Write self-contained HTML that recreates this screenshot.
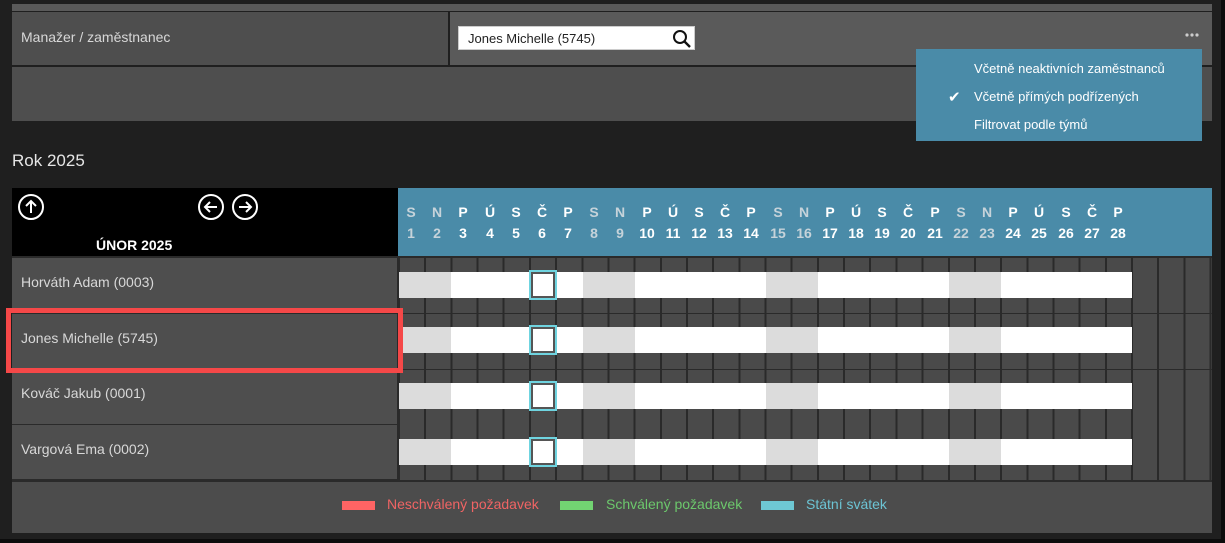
<!DOCTYPE html>
<html><head><meta charset="utf-8"><style>
*{margin:0;padding:0;box-sizing:border-box}
body{width:1225px;height:543px;background:#0c0c0c;position:relative;overflow:hidden;font-family:"Liberation Sans",sans-serif}
.a{position:absolute}
.t{color:#d8d8d8;font-size:14px;white-space:nowrap}
.hd{position:absolute;top:202px;width:26px;text-align:center;color:#fff;font-weight:bold;font-size:14px;line-height:21px}
.hd.w{color:#c6d3da}
.row{position:absolute;left:398px;width:814px;height:55px;background-color:#4a4a4a;background-image:repeating-linear-gradient(90deg,#2a2a2a 0,#2a2a2a 2px,transparent 2px,transparent 26.18px)}
.name{position:absolute;left:12px;width:385px;height:54px;background:#4e4e4e}
.bar{position:absolute;height:26px;background:#fff}
</style></head><body>
<div class="a" style="left:0;top:0;width:1221px;height:539px;background:#1f1f1f"></div>
<div class="a" style="left:12px;top:4px;width:1200px;height:7px;background:#5a5a5a"></div>
<div class="a" style="left:12px;top:12px;width:436px;height:53px;background:#4e4e4e"></div>
<div class="a" style="left:450px;top:12px;width:762px;height:53px;background:#5a5a5a"></div>
<div class="a t" style="left:21px;top:29px">Manažer / zaměstnanec</div>
<div class="a" style="left:458px;top:26px;width:237px;height:24px;background:#fff;border:1px solid #ccc"></div>
<div class="a" style="left:468px;top:31px;font-size:13px;color:#222">Jones Michelle (5745)</div>
<svg class="a" style="left:672px;top:29px" width="20" height="20"><circle cx="8" cy="8" r="6" fill="none" stroke="#111" stroke-width="2"/><line x1="12.5" y1="12.5" x2="18" y2="18" stroke="#111" stroke-width="2.4"/></svg>
<svg class="a" style="left:1185px;top:32px" width="16" height="6"><circle cx="2" cy="3" r="1.6" fill="#ccc"/><circle cx="7" cy="3" r="1.6" fill="#ccc"/><circle cx="12" cy="3" r="1.6" fill="#ccc"/></svg>
<div class="a" style="left:12px;top:67px;width:1200px;height:54px;background:#4e4e4e"></div>
<div class="a" style="left:12px;top:151px;font-size:17px;color:#e6e6e6">Rok 2025</div>

<div class="a" style="left:916px;top:49px;width:286px;height:92px;background:#4a8ba8"></div>
<div class="a" style="left:974px;top:61px;font-size:13px;color:#fff">Včetně neaktivních zaměstnanců</div>
<div class="a" style="left:948px;top:88px;font-size:15px;color:#fff">✔</div>
<div class="a" style="left:974px;top:89px;font-size:13px;color:#fff">Včetně přímých podřízených</div>
<div class="a" style="left:974px;top:117px;font-size:13px;color:#fff">Filtrovat podle týmů</div>

<div class="a" style="left:12px;top:188px;width:386px;height:68px;background:#000"></div>
<svg class="a" style="left:16px;top:192px" width="250" height="30" fill="none" stroke="#fff" stroke-width="2">
<circle cx="15" cy="15" r="12"/><path d="M15 21V9M10 14l5-5 5 5"/>
<circle cx="195" cy="15" r="12"/><path d="M201 15H189M194 10l-5 5 5 5"/>
<circle cx="229" cy="15" r="12"/><path d="M223 15H235M230 10l5 5-5 5"/>
</svg>
<div class="a" style="left:96px;top:237px;font-size:14px;font-weight:bold;color:#fff">ÚNOR 2025</div>
<div class="a" style="left:398px;top:188px;width:814px;height:68px;background:#4a8ba8"></div>
<div class="hd w" style="left:398px">S<br>1</div>
<div class="hd w" style="left:424px">N<br>2</div>
<div class="hd" style="left:450px">P<br>3</div>
<div class="hd" style="left:477px">Ú<br>4</div>
<div class="hd" style="left:503px">S<br>5</div>
<div class="hd" style="left:529px">Č<br>6</div>
<div class="hd" style="left:555px">P<br>7</div>
<div class="hd w" style="left:581px">S<br>8</div>
<div class="hd w" style="left:607px">N<br>9</div>
<div class="hd" style="left:634px">P<br>10</div>
<div class="hd" style="left:660px">Ú<br>11</div>
<div class="hd" style="left:686px">S<br>12</div>
<div class="hd" style="left:712px">Č<br>13</div>
<div class="hd" style="left:738px">P<br>14</div>
<div class="hd w" style="left:765px">S<br>15</div>
<div class="hd w" style="left:791px">N<br>16</div>
<div class="hd" style="left:817px">P<br>17</div>
<div class="hd" style="left:843px">Ú<br>18</div>
<div class="hd" style="left:869px">S<br>19</div>
<div class="hd" style="left:895px">Č<br>20</div>
<div class="hd" style="left:922px">P<br>21</div>
<div class="hd w" style="left:948px">S<br>22</div>
<div class="hd w" style="left:974px">N<br>23</div>
<div class="hd" style="left:1000px">P<br>24</div>
<div class="hd" style="left:1026px">Ú<br>25</div>
<div class="hd" style="left:1053px">S<br>26</div>
<div class="hd" style="left:1079px">Č<br>27</div>
<div class="hd" style="left:1105px">P<br>28</div>

<div class="a" style="left:12px;top:256px;width:1200px;height:226px;background:#2a2a2a"></div>

<div class="name" style="top:258px"></div><div class="a t" style="left:21px;top:274px">Horváth Adam (0003)</div>
<div class="name" style="top:314px"></div><div class="a t" style="left:21px;top:330px">Jones Michelle (5745)</div>
<div class="name" style="top:370px"></div><div class="a t" style="left:21px;top:385px">Kováč Jakub (0001)</div>
<div class="name" style="top:425px"></div><div class="a t" style="left:21px;top:441px">Vargová Ema (0002)</div>

<div class="row" style="top:258px"></div>
<div class="row" style="top:314px"></div>
<div class="row" style="top:370px"></div>
<div class="row" style="top:425px"></div>

<div class="bar" style="top:272px;left:399px;width:733px;background:linear-gradient(90deg,#dcdcdc 0 52px,#fff 52px 184px,#dcdcdc 184px 236px,#fff 236px 367px,#dcdcdc 367px 419px,#fff 419px 550px,#dcdcdc 550px 602px,#fff 602px)"></div>
<div class="bar" style="top:327px;left:399px;width:733px;background:linear-gradient(90deg,#dcdcdc 0 52px,#fff 52px 184px,#dcdcdc 184px 236px,#fff 236px 367px,#dcdcdc 367px 419px,#fff 419px 550px,#dcdcdc 550px 602px,#fff 602px)"></div>
<div class="bar" style="top:383px;left:399px;width:733px;background:linear-gradient(90deg,#dcdcdc 0 52px,#fff 52px 184px,#dcdcdc 184px 236px,#fff 236px 367px,#dcdcdc 367px 419px,#fff 419px 550px,#dcdcdc 550px 602px,#fff 602px)"></div>
<div class="bar" style="top:439px;left:399px;width:733px;background:linear-gradient(90deg,#dcdcdc 0 52px,#fff 52px 184px,#dcdcdc 184px 236px,#fff 236px 367px,#dcdcdc 367px 419px,#fff 419px 550px,#dcdcdc 550px 602px,#fff 602px)"></div>

<div class="a" style="left:529px;top:270px;width:28px;height:30px;border:2px solid #6fd4e0;background:#fff;box-shadow:inset 0 0 0 2px #555"></div>
<div class="a" style="left:529px;top:325px;width:28px;height:30px;border:2px solid #6fd4e0;background:#fff;box-shadow:inset 0 0 0 2px #555"></div>
<div class="a" style="left:529px;top:381px;width:28px;height:30px;border:2px solid #6fd4e0;background:#fff;box-shadow:inset 0 0 0 2px #555"></div>
<div class="a" style="left:529px;top:437px;width:28px;height:30px;border:2px solid #6fd4e0;background:#fff;box-shadow:inset 0 0 0 2px #555"></div>

<div class="a" style="left:6px;top:308px;width:397px;height:65px;border:5px solid #f54848"></div>

<div class="a" style="left:12px;top:482px;width:1200px;height:51px;background:#4c4c4c"></div>
<div class="a" style="left:342px;top:501px;width:33px;height:9px;background:#ff6464"></div>
<div class="a" style="left:387px;top:496px;font-size:14px;color:#f06464">Neschválený požadavek</div>
<div class="a" style="left:560px;top:501px;width:33px;height:9px;background:#72d472"></div>
<div class="a" style="left:606px;top:496px;font-size:14px;color:#6cc86c">Schválený požadavek</div>
<div class="a" style="left:761px;top:501px;width:33px;height:9px;background:#6ec8d4"></div>
<div class="a" style="left:806px;top:496px;font-size:14px;color:#6cc4d4">Státní svátek</div>
</body></html>
